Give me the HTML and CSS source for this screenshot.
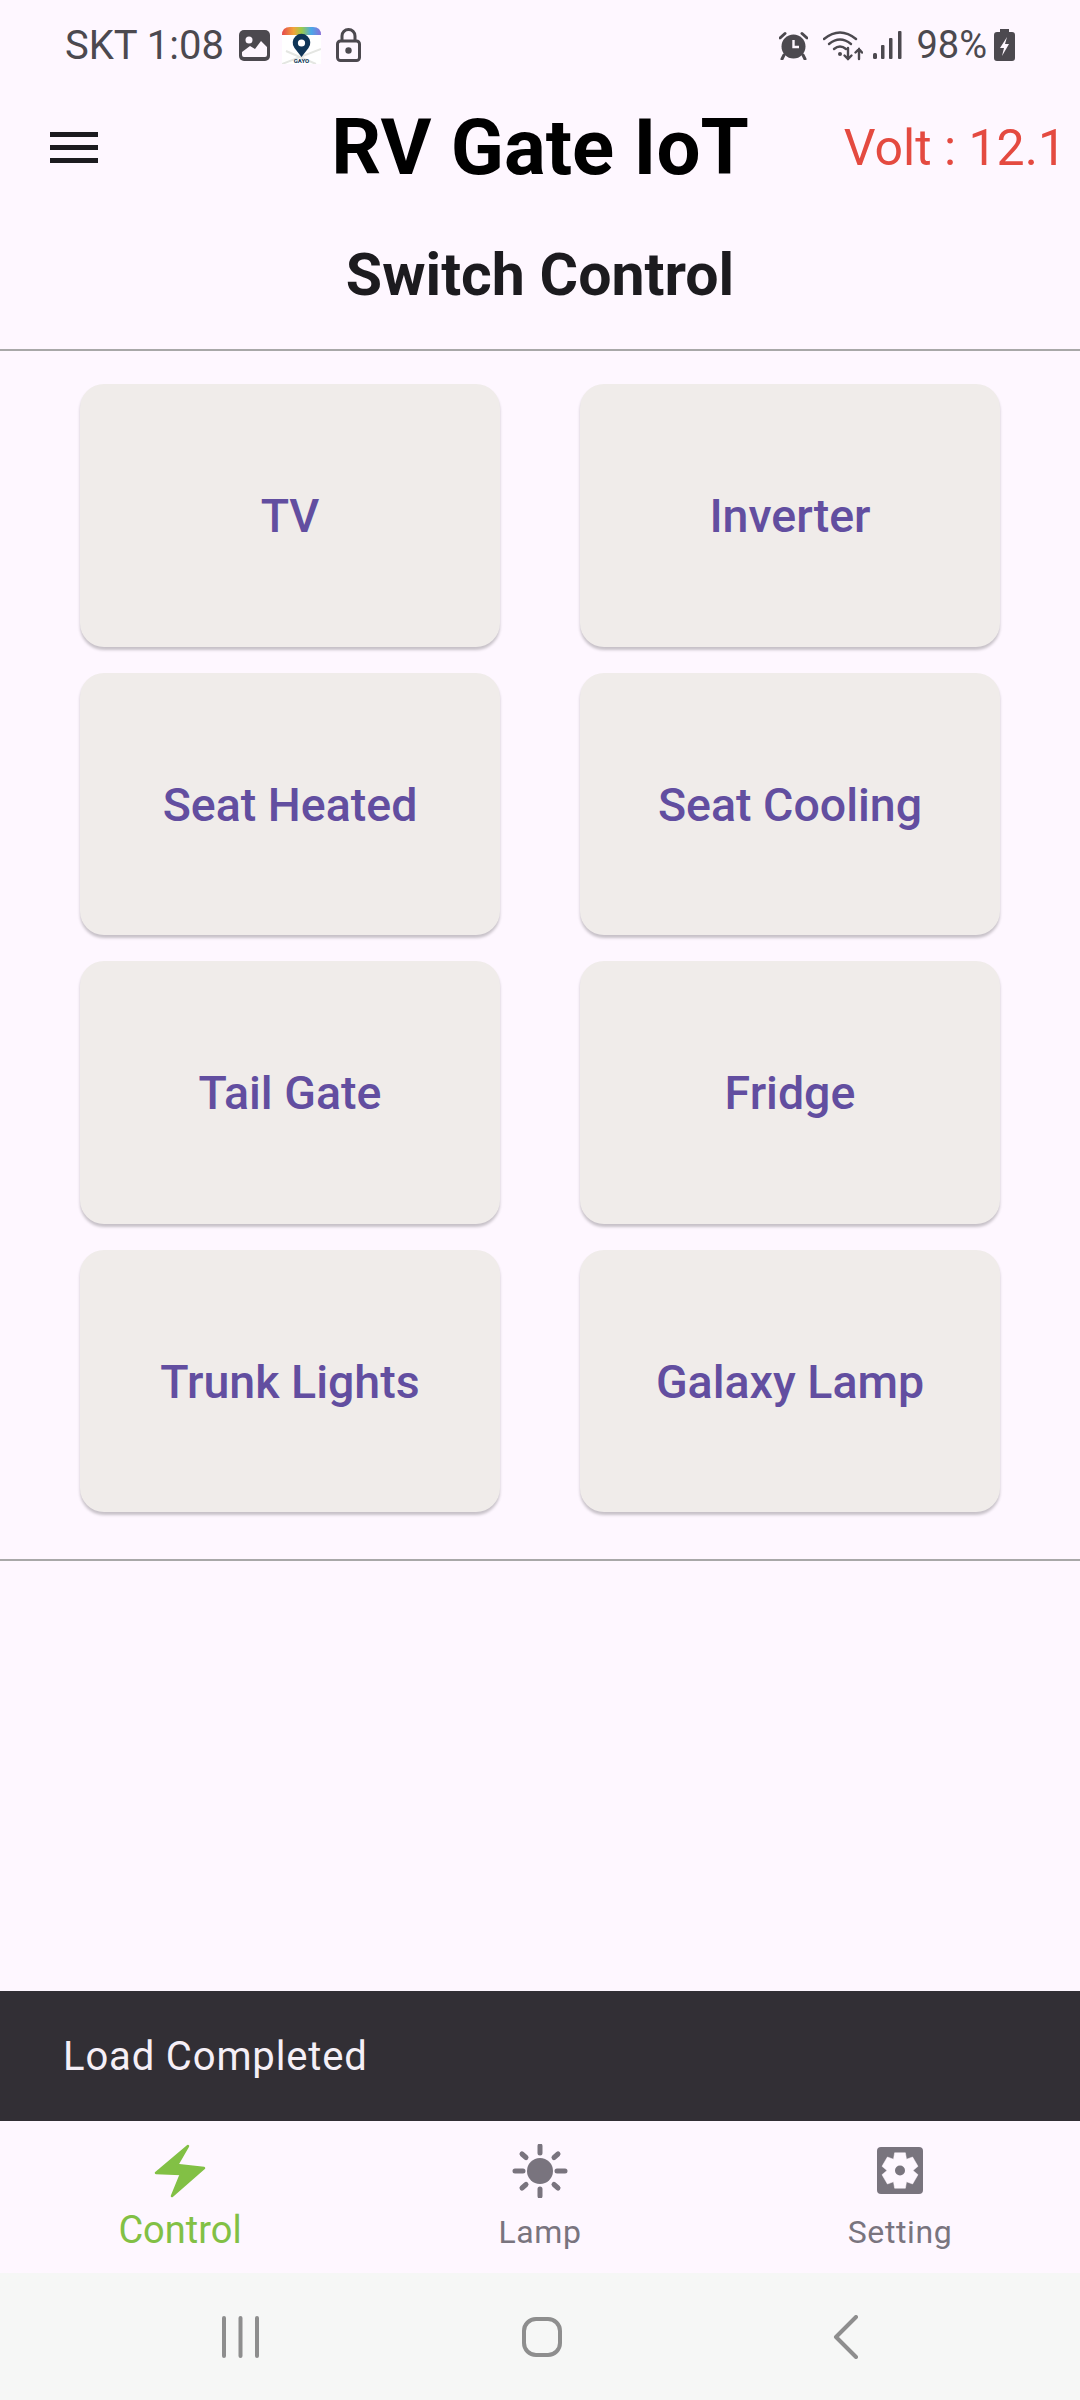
FILE: index.html
```html
<!DOCTYPE html>
<html lang="en">
  <head>
    <meta charset="UTF-8" />
    <meta name="viewport" content="width=device-width, initial-scale=1.0" />
    <title>RV Gate IoT</title>
    <link rel="stylesheet" href="styles.css">
  </head>
  <body>
    <div class="status-bar">
      <span class="carrier">SKT 1:08</span>
      <svg class="ic-image" width="31" height="31" viewBox="0 0 31 31">
        <rect width="31" height="31" rx="5" fill="#4c494f" />
        <circle cx="10" cy="10" r="3.5" fill="#fef7ff" />
        <path d="M3 25 L3 22 L11 16 L16 19 L22 11 L28 17 L28 25 Q28 27 26 27 L5 27 Q3 27 3 25 Z" fill="#fef7ff" />
      </svg>
      <svg class="ic-app" width="39" height="37" viewBox="0 0 39 37">
        <defs>
          <linearGradient id="rainbow" x1="0" y1="0" x2="1" y2="0">
            <stop offset="0" stop-color="#e5484d" />
            <stop offset="0.3" stop-color="#f2a33a" />
            <stop offset="0.5" stop-color="#9ccb4a" />
            <stop offset="0.75" stop-color="#4aa8e8" />
            <stop offset="1" stop-color="#8a6fd8" />
          </linearGradient>
        </defs>
        <rect y="8" width="39" height="29" fill="#ffffff" />
        <path d="M0 37 L39 22 M4 24 L34 37" stroke="#e4e6e2" stroke-width="2" />
        <path d="M0 8 Q0 0 8 0 L31 0 Q39 0 39 8 Z" fill="url(#rainbow)" />
        <path d="M19.5 30 L12.5 21 A8.8 8.8 0 1 1 26.5 21 Z" fill="#0f3557" />
        <circle cx="19.5" cy="16" r="3.6" fill="#ffffff" />
        <text class="app-label" x="19.5" y="36">GAYO</text>
      </svg>
      <svg class="ic-lock" width="25" height="34" viewBox="0 0 25 34">
        <rect x="1.5" y="13" width="22" height="19.5" rx="3" fill="none" stroke="#4c494f" stroke-width="3" />
        <path d="M6 13 L6 8 A6.5 6.5 0 0 1 19 8 L19 13" fill="none" stroke="#4c494f" stroke-width="3" />
        <circle cx="12.5" cy="22.5" r="3.2" fill="#4c494f" />
      </svg>
      <div class="status-right">
        <svg class="ic-alarm" width="29" height="29" viewBox="0 0 29 29">
          <circle cx="14.5" cy="15.5" r="12" fill="#4c494f" />
          <path d="M14.5 9 L14.5 16 L20 16" fill="none" stroke="#fef7ff" stroke-width="2.4" />
          <path d="M1 7 L6 2.5 M28 7 L23 2.5 M5 24 L3 28 M24 24 L26 28" stroke="#4c494f" stroke-width="3" stroke-linecap="round" />
        </svg>
        <svg class="ic-wifi" width="40" height="31" viewBox="0 0 40 31">
          <g fill="none" stroke="#4c494f" stroke-width="2.4" stroke-linecap="round">
            <path d="M1 9 Q17 -4 33 9" />
            <path d="M6 14 Q17 5 28 14" />
            <path d="M11 19 Q17 14 23 19" />
            <path d="M25 18 L25 29 M21.5 25.5 L25 29 L28.5 25.5" />
            <path d="M36 29 L36 19 M32.5 22.5 L36 19 L39 22.5" />
          </g>
          <circle cx="17" cy="24" r="2" fill="#4c494f" />
        </svg>
        <svg class="ic-signal" width="29" height="28" viewBox="0 0 29 28">
          <g fill="#4c494f">
            <rect x="0" y="22" width="4" height="6" rx="1.5" />
            <rect x="8" y="14" width="3.5" height="14" rx="1" />
            <rect x="16" y="7" width="3.5" height="21" rx="1" />
            <rect x="25" y="0" width="3.5" height="28" rx="1" />
          </g>
        </svg>
        <span class="battery-pct">98%</span>
        <svg class="ic-battery" width="21" height="32" viewBox="0 0 21 32">
          <path d="M6 0 L15 0 L15 3 L18 3 Q21 3 21 6 L21 29 Q21 32 18 32 L3 32 Q0 32 0 29 L0 6 Q0 3 3 3 L6 3 Z" fill="#4c494f" />
          <path d="M13 8 L6 19 L10 19 L8 27 L15 15 L11 15 Z" fill="#fef7ff" />
        </svg>
      </div>
    </div>

    <header class="app-bar">
      <div class="menu-icon"><span></span><span></span><span></span></div>
      <h1 class="title">RV Gate IoT</h1>
      <div class="volt">Volt : 12.1</div>
    </header>

    <h2 class="section-title">Switch Control</h2>

    <div class="switch-grid">
      <div class="switch-btn">TV</div>
      <div class="switch-btn">Inverter</div>
      <div class="switch-btn">Seat Heated</div>
      <div class="switch-btn">Seat Cooling</div>
      <div class="switch-btn">Tail Gate</div>
      <div class="switch-btn">Fridge</div>
      <div class="switch-btn">Trunk Lights</div>
      <div class="switch-btn">Galaxy Lamp</div>
    </div>

    <div class="spacer"></div>

    <div class="snackbar">Load Completed</div>

    <nav class="bottom-nav">
      <div class="nav-item active">
        <svg width="52" height="54" viewBox="0 0 52 54">
          <path d="M34 2 L2 29 L27 30 L18 52 L50 24 L23 21 Z" fill="#82c045" stroke="#82c045" stroke-width="2.5" stroke-linejoin="round" />
        </svg>
        <span class="nav-label">Control</span>
      </div>
      <div class="nav-item">
        <svg width="60" height="54" viewBox="0 0 60 54">
          <circle cx="30" cy="27" r="13" fill="#79747e" />
          <g stroke="#79747e" stroke-width="5" stroke-linecap="round">
            <path d="M30 2 L30 9 M30 45 L30 52 M5 27 L13 27 M47 27 L55 27" />
            <path d="M12 10 L16 13.5 M48 10 L44 13.5 M12 44 L16 40.5 M48 44 L44 40.5" />
          </g>
        </svg>
        <span class="nav-label">Lamp</span>
      </div>
      <div class="nav-item">
        <svg width="46" height="54" viewBox="0 0 46 54">
          <rect x="0" y="3" width="46" height="47" rx="4" fill="#79747e" />
          <path d="M28.4 8.8 L17.6 8.8 L16.5 15.2 L10.4 13 L5 22.3 L10 26.5 L5 30.7 L10.4 40 L16.5 37.8 L17.6 44.2 L28.4 44.2 L29.5 37.8 L35.6 40 L41 30.7 L36 26.5 L41 22.3 L35.6 13 L29.5 15.2 Z" fill="#fef7ff" stroke="#fef7ff" stroke-width="0.5" stroke-linejoin="round" />
          <circle cx="23" cy="26.5" r="5" fill="#79747e" />
        </svg>
        <span class="nav-label">Setting</span>
      </div>
    </nav>

    <div class="system-nav">
      <svg width="38" height="42" viewBox="0 0 38 42">
        <path d="M3 2 L3 40 M19.5 2 L19.5 40 M36 2 L36 40" stroke="#8e8e8e" stroke-width="4" stroke-linecap="round" />
      </svg>
      <svg width="42" height="42" viewBox="0 0 42 42">
        <rect x="3" y="3" width="36" height="36" rx="12" fill="none" stroke="#8e8e8e" stroke-width="4" />
      </svg>
      <svg class="ic-back" width="26" height="44" viewBox="0 0 26 44">
        <path d="M23 2 L3 22 L23 42" fill="none" stroke="#8e8e8e" stroke-width="4" stroke-linecap="round" stroke-linejoin="round" />
      </svg>
    </div>
  </body>
</html>
```

FILE: styles.css
```css
* {
  box-sizing: border-box;
}
body {
  margin: 0;
  width: 1080px;
  height: 2400px;
  display: flex;
  flex-direction: column;
  background-color: #fef7ff;
  font-family: Roboto, "Noto Sans", sans-serif;
  overflow: hidden;
}

/* status bar */
.status-bar {
  height: 90px;
  padding: 0 65px;
  display: flex;
  align-items: center;
  color: #4c494f;
  font-size: 38px;
}
.carrier {
  margin-right: 15px;
  font-size: 40px;
}
.ic-app {
  margin: 0 15px 0 12px;
}
.app-label {
  font-size: 6px;
  font-weight: 700;
  fill: #0f3557;
  text-anchor: middle;
}
.status-right {
  margin-left: auto;
  display: flex;
  align-items: center;
}
.ic-wifi {
  margin-left: 15px;
}
.ic-signal {
  margin-left: 10px;
}
.battery-pct {
  margin-left: 14px;
  margin-right: 7px;
}

/* app bar */
.app-bar {
  height: 114px;
  padding: 0 14px;
  display: grid;
  grid-template-columns: 1fr auto 1fr;
  align-items: center;
}
.menu-icon {
  width: 48px;
  margin-left: 36px;
  display: flex;
  flex-direction: column;
  gap: 8px;
}
.menu-icon span {
  height: 5px;
  background-color: #1c1b1f;
}
.title {
  margin: 0;
  font-size: 78px;
  font-weight: 700;
  color: #000000;
}
.volt {
  justify-self: end;
  padding-top: 2px;
  font-size: 50px;
  color: #e44a40;
}
.section-title {
  margin: 0;
  height: 147px;
  padding-top: 41px;
  border-bottom: 2px solid #a8a8a8;
  text-align: center;
  font-size: 59px;
  line-height: 60px;
  font-weight: 700;
  color: #1c1b1f;
}

/* switches */
.switch-grid {
  padding: 33px 80px 47px 80px;
  display: grid;
  grid-template-columns: 420px 420px;
  grid-auto-rows: 262.5px;
  justify-content: space-between;
  row-gap: 26px;
  border-bottom: 2px solid #a8a8a8;
}
.switch-btn {
  padding-top: 2px;
  display: flex;
  align-items: center;
  justify-content: center;
  background-color: #f0ecea;
  border-radius: 24px;
  box-shadow: 0 3px 3px rgba(0, 0, 0, 0.22);
  color: #624ea0;
  font-size: 46.5px;
  font-weight: 500;
}
.spacer {
  flex: 1;
}

/* snackbar */
.snackbar {
  height: 130px;
  padding-left: 63px;
  display: flex;
  align-items: center;
  background-color: #322f35;
  color: #f5eff7;
  font-size: 40px;
  letter-spacing: 0.85px;
}

/* bottom navigation */
.bottom-nav {
  height: 152px;
  display: grid;
  grid-template-columns: repeat(3, 360px);
}
.nav-item {
  padding-top: 23px;
  display: flex;
  flex-direction: column;
  align-items: center;
}
.nav-label {
  margin-top: 15px;
  font-size: 32px;
  letter-spacing: 0.6px;
  color: #79747e;
}
.active .nav-label {
  margin-top: 10px;
  font-size: 38px;
  letter-spacing: 0;
  color: #82c045;
}

/* android nav */
.system-nav {
  height: 127px;
  padding-left: 89px;
  display: grid;
  grid-template-columns: repeat(3, 302px);
  align-items: center;
  justify-items: center;
  background-color: #f6f7f6;
}
.ic-back {
  margin-left: 3px;
}
```
